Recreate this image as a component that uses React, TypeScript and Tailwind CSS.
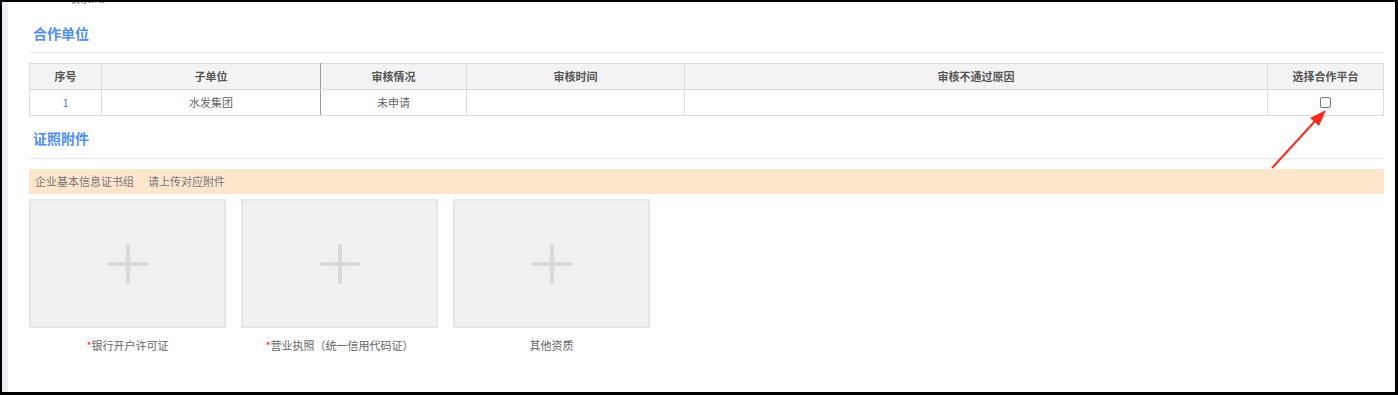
import React from 'react'

const cards = [
  { label: '银行开户许可证', required: true },
  { label: '营业执照（统一信用代码证）', required: true },
  { label: '其他资质', required: false },
]

function UploadCard({ label, required }: { label: string; required: boolean }) {
  return (
    <div className="w-[197px] flex flex-col items-center">
      <div className="w-[197px] h-[129px] border-2 border-[#e6e6e6] bg-[#f1f1f1] flex items-center justify-center">
        <div className="relative w-[40px] h-[40px]">
          <div className="absolute left-0 top-[18px] w-[40px] h-[4px] rounded-full bg-[#d9d9d9]" />
          <div className="absolute top-0 left-[18px] w-[4px] h-[40px] rounded-full bg-[#d9d9d9]" />
        </div>
      </div>
      <p className="mt-[9px] text-[11px] leading-4 text-[#666]">
        {required && <span className="text-[#ff2b2b]">*</span>}
        {label}
      </p>
    </div>
  )
}

export default function App() {
  const font = { fontFamily: '"Microsoft YaHei", "Noto Sans CJK SC", "Noto Sans", sans-serif' }

  return (
    <div className="w-[1398px] h-[395px] bg-black pt-[2px] pl-[2px] pr-[3px] pb-[3px]" style={font}>
      <div className="relative h-full flex bg-white">
        {/* left strip */}
        <div className="w-[6px] bg-[#eef0f4] shrink-0" />

        <div className="flex-1 pl-[21px] pr-[12px]">
          {/* clipped line above */}
          <div className="h-[21px] overflow-hidden">
            <p className="-mt-[12px] ml-[40px] text-[11px] leading-4 text-[#666]">联系人:</p>
          </div>

          {/* 合作单位 */}
          <div className="pl-[4px] pb-[9px] border-b border-[#e8e8e8]">
            <h2 className="text-[14px] leading-5 font-semibold text-[#4d8df5]">合作单位</h2>
          </div>

          <table className="mt-[10px] w-[1354px] table-fixed border-collapse border border-[#d6d6d6] text-[11px] text-center">
            <colgroup>
              <col className="w-[72px]" />
              <col className="w-[219px]" />
              <col className="w-[146px]" />
              <col className="w-[218px]" />
              <col className="w-[583px]" />
              <col className="w-[116px]" />
            </colgroup>
            <thead>
              <tr className="h-[26px] bg-[#f3f3f3] text-[#555]">
                <th className="border border-[#dcdcdc] font-semibold">序号</th>
                <th className="border border-[#dcdcdc] border-r-[#9a9a9a] font-semibold">子单位</th>
                <th className="border border-[#dcdcdc] font-semibold">审核情况</th>
                <th className="border border-[#dcdcdc] font-semibold">审核时间</th>
                <th className="border border-[#dcdcdc] font-semibold">审核不通过原因</th>
                <th className="border border-[#dcdcdc] font-semibold">选择合作平台</th>
              </tr>
            </thead>
            <tbody>
              <tr className="h-[26px] text-[#666]">
                <td className="border border-[#dcdcdc] text-[#5a7db0]">1</td>
                <td className="border border-[#dcdcdc] border-r-[#9a9a9a]">水发集团</td>
                <td className="border border-[#dcdcdc]">未申请</td>
                <td className="border border-[#dcdcdc]" />
                <td className="border border-[#dcdcdc]" />
                <td className="border border-[#dcdcdc]">
                  <div className="mx-auto w-[11px] h-[11px] rounded-[2px] border border-[#7a7a7a] bg-white" />
                </td>
              </tr>
            </tbody>
          </table>

          {/* 证照附件 */}
          <div className="pt-[12px] pl-[4px] pb-[10px] border-b border-[#e8e8e8]">
            <h2 className="text-[14px] leading-5 font-semibold text-[#4d8df5]">证照附件</h2>
          </div>

          <div className="mt-[10px] h-[25px] bg-[#fde6cc] flex items-center gap-[14px] pl-[6px] text-[11px] text-[#777]">
            <span>企业基本信息证书组</span>
            <span>请上传对应附件</span>
          </div>

          <div className="mt-[5px] flex gap-[15px]">
            {cards.map((c) => (
              <UploadCard key={c.label} label={c.label} required={c.required} />
            ))}
          </div>
        </div>

        {/* red annotation arrow */}
        <svg className="absolute left-0 top-0 pointer-events-none" width="1393" height="390" viewBox="0 0 1393 390">
          <g transform="translate(-2,-2)">
            <line x1="1272" y1="168" x2="1316" y2="120" stroke="#ff2a1a" strokeWidth="2" />
            <polygon points="1326,110 1310,118 1319,126" fill="#ff2a1a" />
          </g>
        </svg>
      </div>
    </div>
  )
}
